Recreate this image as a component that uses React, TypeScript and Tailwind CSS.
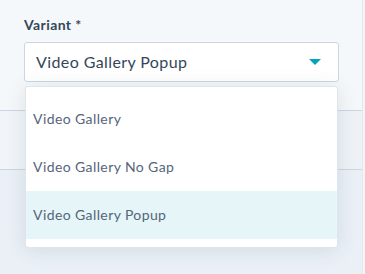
export default function App() {
  const options = ['Video Gallery', 'Video Gallery No Gap', 'Video Gallery Popup']
  const selected = 'Video Gallery Popup'

  return (
    <div className="relative flex h-[274px] w-[365px] overflow-hidden bg-[#eaf0f6] font-['Lato',sans-serif] tracking-[0.025em]">
      <div className="flex w-[362px] flex-col">
        <div className="h-[111px] border-b border-[#cbd6e2] bg-[#f5f8fa] px-6 pt-[13px]">
          <label className="block text-[14px] font-bold leading-6 text-[#33475b]">
            Variant *
          </label>
          <div className="mt-[5px] flex h-10 w-[315px] items-center justify-between rounded-[3px] border border-[#cbd6e2] bg-white pl-[11px] pr-4">
            <span className="text-[16px] text-[#33475b]">{selected}</span>
            <svg width="12" height="6" viewBox="0 0 12 6" className="mr-px">
              <path d="M0 0h12L6 6z" fill="#00a4bd" />
            </svg>
          </div>
        </div>
        <div className="h-[59px] border-b border-[#cbd6e2] bg-gradient-to-r from-[#f1f5f9] to-[#eef2f7]" />
        <div className="flex-1" />
      </div>
      <div className="w-[3px] border-l border-[#e3e9ef] bg-[#f3f6f9]" />

      <div className="absolute left-[25px] top-[86px] w-[313px] rounded-[3px] border border-[#dfe5ec] bg-white py-2 shadow-[0_2px_20px_0_rgba(45,62,80,0.12)]">
        {options.map((opt) => (
          <div
            key={opt}
            className={
              'flex h-12 items-center px-[7px] pb-px text-[14px] text-[#55657a] ' +
              (opt === selected ? 'bg-[#e5f5f8]' : '')
            }
          >
            {opt}
          </div>
        ))}
      </div>
    </div>
  )
}
